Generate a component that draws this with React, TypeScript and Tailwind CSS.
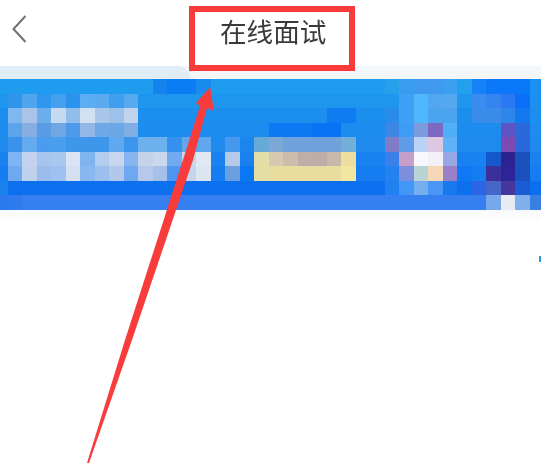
import React from "react";

// pixelated banner: each row has a base colour and a few mosaic cells
const BANNER_ROWS: { base: string; cells: Record<number, string> }[] = [
  {
    base: "#1f9bf0",
    cells: {
      11: "#1583ee", 12: "#0a7df5", 13: "#0a7df5", 14: "#1a8aee",
      27: "#27a0ea", 28: "#3a9cf0", 29: "#3f99ee", 30: "#3f99ee", 31: "#3ca0f0",
      32: "#22a0ee", 33: "#1682f5", 34: "#0a78f8", 35: "#0a78f8", 36: "#0a78f8", 37: "#1a90f0",
    },
  },
  {
    base: "#1f96ee",
    cells: {
      1: "#2e95ea", 2: "#4fa6ee", 3: "#2f96ee", 4: "#45a0f0", 5: "#2a93ec",
      6: "#5cadf2", 7: "#5cabf0", 8: "#3f9eee", 9: "#56a9ee",
      28: "#3fa0f8", 29: "#4fb8fc", 30: "#52a8f0", 31: "#55a8f0",
      33: "#3a8cf0", 34: "#3584f0", 35: "#2c78f4", 36: "#0a6ff8", 37: "#1a90f0",
    },
  },
  {
    base: "#1c8fee",
    cells: {
      1: "#7db8f0", 2: "#a9c4e8", 3: "#6aaeec", 4: "#c6d9ef", 5: "#91bdeb",
      6: "#d2e0f3", 7: "#a9c6ea", 8: "#9dc2ea", 9: "#c0d3ec",
      23: "#0f7cf2", 24: "#0f7cf2",
      27: "#2a8cea", 28: "#3fa0f8", 29: "#4fb8fc", 30: "#4ba4ee", 31: "#4ca4ee",
      33: "#3a8cec", 34: "#3a8ce8", 35: "#2d86ea", 36: "#1278ec",
    },
  },
  {
    base: "#1c8cee",
    cells: {
      1: "#5ea4ea", 2: "#86aee3", 3: "#5a9be6", 4: "#6fa7e4", 5: "#4e9aea",
      6: "#93b7e6", 7: "#6ea8e6", 8: "#6ba6e6", 9: "#7eaee4",
      19: "#0c78f2", 20: "#0c78f2", 21: "#0c78f2", 22: "#0a72f5", 23: "#0a72f5",
      27: "#3d87e4", 28: "#3f9cf5", 29: "#7d9bdc", 30: "#7d68c4", 31: "#4fb0f8",
      35: "#5e55c4", 36: "#2a68dc",
    },
  },
  {
    base: "#1f8aee",
    cells: {
      1: "#3a92ea", 2: "#63aaf0", 3: "#4a9cee", 4: "#4b9eee", 5: "#3f97ec", 6: "#3f97ec",
      7: "#3f97ec", 8: "#60a8f0", 9: "#3d96ee", 10: "#6cb0ee", 11: "#6cb0ee", 12: "#3590ee",
      13: "#60a8ee", 14: "#60a8ee", 16: "#4598ee", 17: "#1a86ee",
      18: "#66aad8", 19: "#7ba8d6", 20: "#6fa2da", 21: "#6fa2da", 22: "#6fa2da", 23: "#6fa2da", 24: "#72b0da",
      27: "#7f7cca", 28: "#5e9ce8", 29: "#bcd2f5", 30: "#dcc8e0", 31: "#5fb2f8",
      35: "#7d4ab4", 36: "#2a68dc",
    },
  },
  {
    base: "#1a82f0",
    cells: {
      1: "#7eb4f4", 2: "#c3d3ee", 3: "#a7c4ee", 4: "#a8c8f0", 5: "#dbe4f4", 6: "#7fb4ee",
      7: "#b3cdee", 8: "#c8d7ee", 9: "#85b6f0", 10: "#c5d3ea", 11: "#cbd8ec", 12: "#70aaf0",
      13: "#c8d5ea", 14: "#e2e8f2", 16: "#b5c9e8", 17: "#1a80f0",
      18: "#e2dea8", 19: "#d6c9b0", 20: "#cdbcac", 21: "#c0aca8", 22: "#bfaba8", 23: "#c8b8aa", 24: "#ecdf9e",
      27: "#3b80e8", 28: "#c69fc8", 29: "#f8f8fc", 30: "#f4f0f8", 31: "#98a8e4",
      34: "#1458cc", 35: "#2a2390", 36: "#1c50bc",
    },
  },
  {
    base: "#157cf2",
    cells: {
      1: "#6ea9f0", 2: "#c0d1ee", 3: "#9dbcee", 4: "#9fc0f0", 5: "#d4e0f2", 6: "#89b8f0",
      7: "#9dbff0", 8: "#b2c8ea", 9: "#6fa8f2", 10: "#b6c9ec", 11: "#a6c0e8", 12: "#4f96f0",
      13: "#c6d5ee", 14: "#dce5f2", 16: "#6a9fe0", 17: "#0a78f5",
      18: "#e4dea5", 19: "#e8dc9e", 20: "#e8dc9e", 21: "#e8dc9e", 22: "#e8dc9e", 23: "#e8dc9e", 24: "#f2e6a0",
      27: "#2580f0", 28: "#7b8fdc", 29: "#b8d4d4", 30: "#f4d8b8", 31: "#9a80c8",
      32: "#0f78f4", 34: "#3a3098", 35: "#2c2498", 36: "#1c50bc",
    },
  },
  {
    base: "#0c6fee",
    cells: {
      0: "#1a80ea", 27: "#2080f0", 28: "#4296f8", 29: "#74aef0", 30: "#4a96f4", 31: "#1878ee",
      33: "#2a66e6", 34: "#4666c8", 35: "#44389c", 36: "#1a5cd4",
    },
  },
  {
    base: "#357ff0",
    cells: {
      0: "#2a78ee", 1: "#2e7aee",
      34: "#78a8ec", 35: "#e8ecf2", 36: "#80b0ec", 37: "#3a80e4",
    },
  },
];

const COLUMNS = Array.from({ length: 38 }, (_, i) => i);

const App = () => {
  return (
    <div className="relative h-[467px] w-[541px] overflow-hidden bg-white font-['Noto_Sans_CJK_SC','Liberation_Sans',sans-serif]">
      {/* header */}
      <header className="flex h-[66px] items-center pl-3">
        <svg viewBox="0 0 14 28" className="h-7 w-3.5 -translate-y-[4px] blur-[0.4px]" fill="none">
          <path d="M13.5 1 1.5 14l12 13" stroke="#707070" strokeWidth="2" />
        </svg>
        <h1 className="ml-[194px] -translate-y-[2px] text-[26.6px] leading-none font-normal text-[#3a3a3a] blur-[0.4px]">
          在线面试
        </h1>
      </header>

      {/* tab edge above the banner */}
      <div className="h-[13px] bg-[#f4f7fa]">
        <div className="h-full w-[190px] rounded-tr-[22px] bg-[#e0edf6]" />
      </div>

      {/* banner */}
      <div className="overflow-hidden">
        <section className="-ml-[7px] grid w-[551px] grid-cols-[repeat(38,14.5px)] grid-rows-[repeat(9,14.55px)] blur-[0.7px]">
          {BANNER_ROWS.map((row, rowIndex) =>
            COLUMNS.map((col) => (
              <div
                key={`${rowIndex}-${col}`}
                style={{ backgroundColor: row.cells[col] ?? row.base }}
              />
            )),
          )}
        </section>
      </div>

      {/* faded area under the banner */}
      <div className="h-[14px] bg-gradient-to-b from-[#f7f9fc] to-white" />
      <div className="mt-[32px] flex justify-end">
        <div className="h-[6px] w-[2px] bg-[#2a9ad8]" />
      </div>

      {/* red annotation */}
      <div className="absolute top-[6px] left-[189px] h-[65px] w-[166px] border-[6px] border-[#f83a3a]" />
      <svg viewBox="0 0 541 467" className="absolute inset-0 h-[467px] w-[541px] blur-[0.3px]">
        <polygon
          points="87,463 125,340 183,160 200,106 196,103 210,87 214,111 207,108 193,160 132,340 89,463"
          fill="#f83c3c"
        />
      </svg>
    </div>
  );
};

export default App;
